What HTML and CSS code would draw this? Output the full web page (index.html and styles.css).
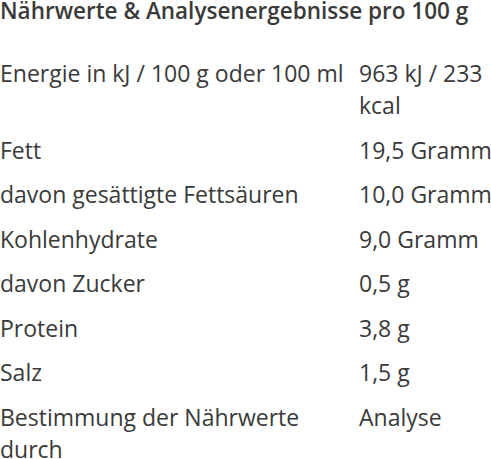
FILE: index.html
```html
<!DOCTYPE html>
<html lang="de">
<head>
<meta charset="utf-8">
<link rel="stylesheet" href="styles.css">
</head>
<body>
<div class="panel">
  <h2 class="title">Nährwerte &amp; Analysenergebnisse pro 100 g</h2>
  <div class="facts">
    <div class="row"><div class="label">Energie in kJ / 100 g oder 100 ml</div><div class="value">963 kJ / 233 kcal</div></div>
    <div class="row"><div class="label">Fett</div><div class="value">19,5 Gramm</div></div>
    <div class="row"><div class="label">davon gesättigte Fettsäuren</div><div class="value">10,0 Gramm</div></div>
    <div class="row"><div class="label">Kohlenhydrate</div><div class="value">9,0 Gramm</div></div>
    <div class="row"><div class="label">davon Zucker</div><div class="value">0,5 g</div></div>
    <div class="row"><div class="label">Protein</div><div class="value">3,8 g</div></div>
    <div class="row"><div class="label">Salz</div><div class="value">1,5 g</div></div>
    <div class="row"><div class="label">Bestimmung der Nährwerte durch</div><div class="value">Analyse</div></div>
  </div>
</div>
</body>
</html>
```
FILE: styles.css
```css
html, body {
  margin: 0;
  padding: 0;
  background: #fff;
}
body {
  font-family: "Open Sans", "Liberation Sans", sans-serif;
  color: #3a3a3a;
  width: 491px;
  overflow: hidden;
}
.title {
  margin: 0;
  font-size: 22.5px;
  font-weight: 600;
  line-height: 21px;
  color: #3a3a3a;
  white-space: nowrap;
}
.facts {
  margin-top: 30px;
  font-size: 23px;
  line-height: 32px;
}
.row {
  display: grid;
  grid-template-columns: 359px 136px;
  padding: 6px 0 6.5px;
}
.label {
  padding-right: 8px;
}
```
